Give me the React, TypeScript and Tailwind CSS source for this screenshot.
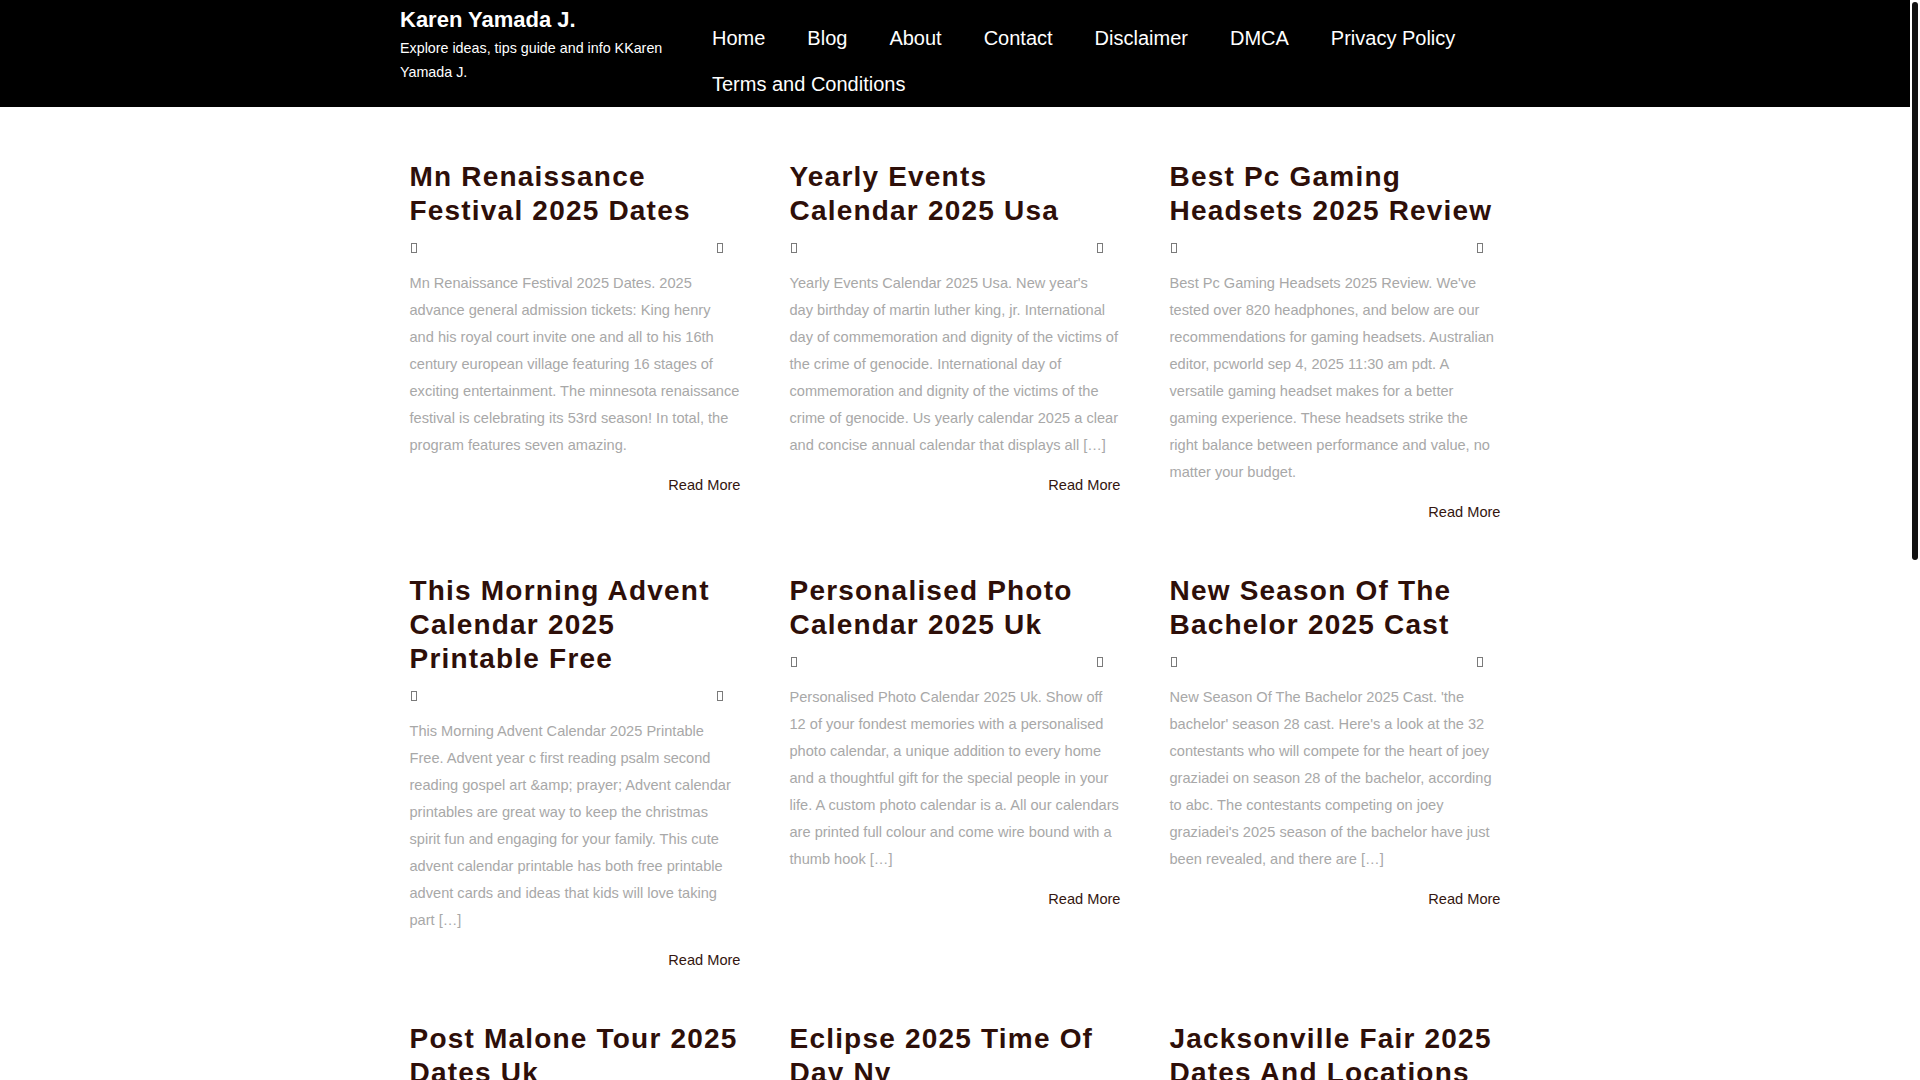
import { Fragment } from 'react'

const NAV = ['Home', 'Blog', 'About', 'Contact', 'Disclaimer', 'DMCA', 'Privacy Policy', 'Terms and Conditions']

type Post = { title: string; excerpt: string[] }

// excerpt lines follow the wrapping of the original page
const POSTS: Post[] = [
  {
    title: 'Mn Renaissance Festival 2025 Dates',
    excerpt: [
      'Mn Renaissance Festival 2025 Dates. 2025',
      'advance general admission tickets: King henry',
      'and his royal court invite one and all to his 16th',
      'century european village featuring 16 stages of',
      'exciting entertainment. The minnesota renaissance',
      'festival is celebrating its 53rd season! In total, the',
      'program features seven amazing.',
    ],
  },
  {
    title: 'Yearly Events Calendar 2025 Usa',
    excerpt: [
      "Yearly Events Calendar 2025 Usa. New year's",
      'day birthday of martin luther king, jr. International',
      'day of commemoration and dignity of the victims of',
      'the crime of genocide. International day of',
      'commemoration and dignity of the victims of the',
      'crime of genocide. Us yearly calendar 2025 a clear',
      'and concise annual calendar that displays all […]',
    ],
  },
  {
    title: 'Best Pc Gaming Headsets 2025 Review',
    excerpt: [
      "Best Pc Gaming Headsets 2025 Review. We've",
      'tested over 820 headphones, and below are our',
      'recommendations for gaming headsets. Australian',
      'editor, pcworld sep 4, 2025 11:30 am pdt. A',
      'versatile gaming headset makes for a better',
      'gaming experience. These headsets strike the',
      'right balance between performance and value, no',
      'matter your budget.',
    ],
  },
  {
    title: 'This Morning Advent Calendar 2025 Printable Free',
    excerpt: [
      'This Morning Advent Calendar 2025 Printable',
      'Free. Advent year c first reading psalm second',
      'reading gospel art &amp; prayer; Advent calendar',
      'printables are great way to keep the christmas',
      'spirit fun and engaging for your family. This cute',
      'advent calendar printable has both free printable',
      'advent cards and ideas that kids will love taking',
      'part […]',
    ],
  },
  {
    title: 'Personalised Photo Calendar 2025 Uk',
    excerpt: [
      'Personalised Photo Calendar 2025 Uk. Show off',
      '12 of your fondest memories with a personalised',
      'photo calendar, a unique addition to every home',
      'and a thoughtful gift for the special people in your',
      'life. A custom photo calendar is a. All our calendars',
      'are printed full colour and come wire bound with a',
      'thumb hook […]',
    ],
  },
  {
    title: 'New Season Of The Bachelor 2025 Cast',
    excerpt: [
      "New Season Of The Bachelor 2025 Cast. 'the",
      "bachelor' season 28 cast. Here's a look at the 32",
      'contestants who will compete for the heart of joey',
      'graziadei on season 28 of the bachelor, according',
      'to abc. The contestants competing on joey',
      "graziadei's 2025 season of the bachelor have just",
      'been revealed, and there are […]',
    ],
  },
  {
    title: 'Post Malone Tour 2025 Dates Uk',
    excerpt: [
      'Post Malone Tour 2025 Dates Uk. Post malone has',
      'announced a run of stadium dates across the uk',
      'and europe for the summer, with special guests',
      'joining him on selected nights. Tickets go on',
      'general sale this friday at 10am local time, with',
      'presale access for fans who sign up to the official',
      'mailing list before […]',
    ],
  },
  {
    title: 'Eclipse 2025 Time Of Day Ny',
    excerpt: [
      'Eclipse 2025 Time Of Day Ny. The partial solar',
      'eclipse will be visible from new york in the early',
      'morning hours, shortly after sunrise. Here is',
      'everything you need to know about the timing,',
      'where to look and how to safely watch the eclipse',
      'with proper eye protection from the city and',
      'upstate […]',
    ],
  },
  {
    title: 'Jacksonville Fair 2025 Dates And Locations',
    excerpt: [
      'Jacksonville Fair 2025 Dates And Locations. The',
      'jacksonville fair returns to the fairgrounds with',
      'rides, games, livestock shows and plenty of fair',
      'food for the whole family. Find the full schedule',
      'of dates, opening hours, parking details and ticket',
      'prices for this year before you plan your visit […]',
    ],
  },
]

function Tofu() {
  return <span className="inline-block w-[6px] h-[10px] border border-[#7a7a7a]" />
}

function PostCard({ post }: { post: Post }) {
  return (
    <article className="px-[24.5px]">
      <h2 className="text-[28px] leading-[34px] font-bold tracking-[1.2px] text-[#2e0f09]">{post.title}</h2>
      <div className="mt-[10px] h-[20px] flex items-center justify-between pl-[1px] pr-[18px]">
        <Tofu />
        <Tofu />
      </div>
      <p className="mt-[12px] text-[14.6px] leading-[27px] text-[#a8a8a8]">
        {post.excerpt.map((line, i) => (
          <Fragment key={i}>
            {i > 0 && <br />}
            {line}
          </Fragment>
        ))}
      </p>
      <div className="mt-[14px] text-right">
        <a href="#" className="text-[14.6px] leading-[22px] text-[#34160f]">
          Read More
        </a>
      </div>
    </article>
  )
}

export default function App() {
  return (
    <div className="flex h-screen bg-white font-['Liberation_Sans',Arial,sans-serif]">
      <div className="flex-1 overflow-y-auto [scrollbar-width:none]">
        <header className="bg-black">
          <div className="w-[1110px] mx-auto flex items-start">
            <div className="w-[291px] shrink-0 pt-[7px]">
              <a href="#" className="block text-[22px] leading-[26px] font-bold text-white">
                Karen Yamada J.
              </a>
              <p className="mt-[3px] text-[14.3px] leading-[24px] text-white">
                Explore ideas, tips guide and info KKaren Yamada J.
              </p>
            </div>
            <nav className="flex-1 pt-[15px]">
              <ul className="flex flex-wrap">
                {NAV.map((item) => (
                  <li key={item}>
                    <a href="#" className="block px-[21px] text-[20px] leading-[46px] text-white">
                      {item}
                    </a>
                  </li>
                ))}
              </ul>
            </nav>
          </div>
        </header>

        <main className="w-[1140px] mx-auto pt-[53px] pb-[80px]">
          <div className="grid grid-cols-3 gap-y-[50px] items-start">
            {POSTS.map((post) => (
              <PostCard key={post.title} post={post} />
            ))}
          </div>
          <div className="mt-[60px] flex justify-center gap-2 text-[15px]">
            <span className="px-3 py-2 bg-[#2e0f09] text-white">1</span>
            <a href="#" className="px-3 py-2 text-[#2e0f09]">2</a>
            <a href="#" className="px-3 py-2 text-[#2e0f09]">3</a>
            <a href="#" className="px-3 py-2 text-[#2e0f09]">Next »</a>
          </div>
        </main>

        <footer className="bg-black py-[140px]">
          <p className="text-center text-[14px] text-white">Copyright © 2025 Karen Yamada J.</p>
        </footer>
      </div>

      {/* scrollbar track */}
      <div className="w-[10px] shrink-0 bg-white pt-[2px] px-[2px]">
        <div className="h-[558px] rounded-[3px] bg-[#111111]" />
      </div>
    </div>
  )
}
